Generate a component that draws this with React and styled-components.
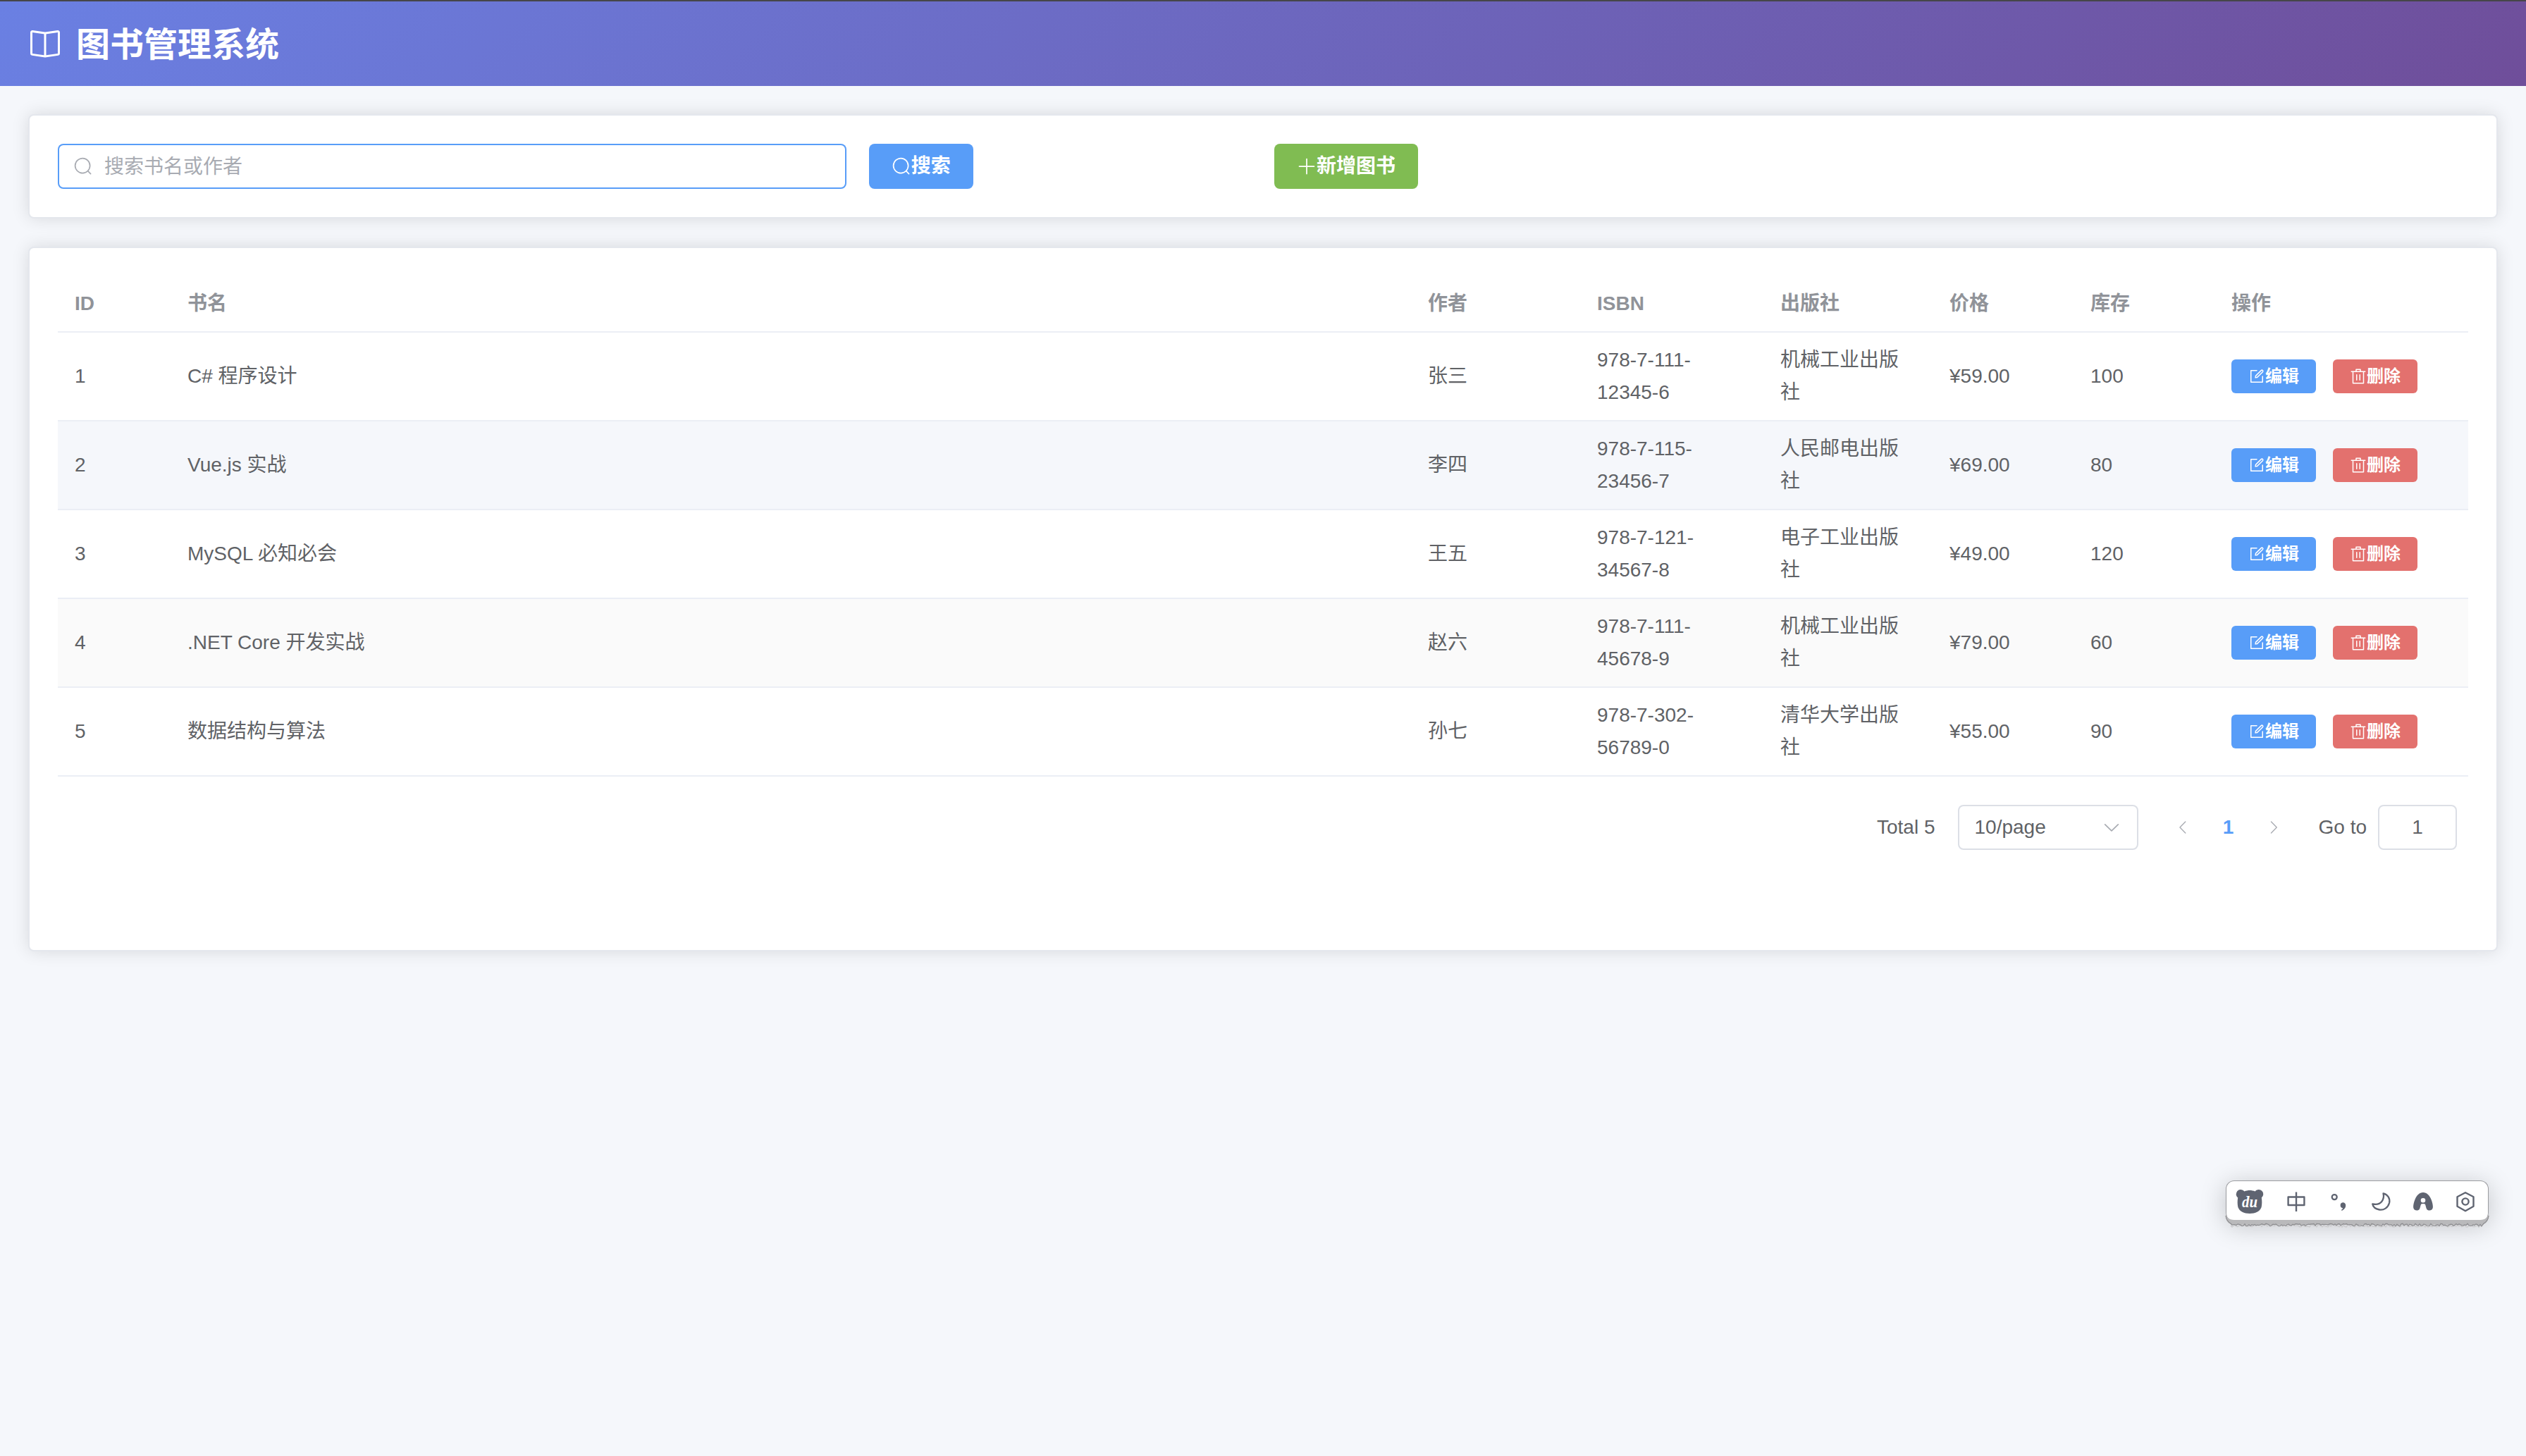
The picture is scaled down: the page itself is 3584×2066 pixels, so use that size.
import React from 'react';
import styled, { createGlobalStyle, css } from 'styled-components';

const c = {
  primary: '#589df8',
  success: '#80bc52',
  danger: '#e3716e',
  text: '#606266',
  muted: '#909399',
  placeholder: '#a8abb2',
  line: '#ebeef5',
  border: '#dcdfe6',
  page: '#f5f7fb',
};

const GlobalStyle = createGlobalStyle`
  * { box-sizing: border-box; }
  body {
    margin: 0;
    background: ${c.page};
    color: ${c.text};
    font-family: "Liberation Sans", Arial, "Noto Sans CJK SC", sans-serif;
    font-size: 28px;
  }
  input, button { font-family: inherit; }
`;

const Page = styled.div`
  position: relative;
  display: flex;
  flex-direction: column;
  min-height: 2066px;
  border-top: 2px solid #464649;
`;

const Header = styled.header`
  display: flex;
  align-items: center;
  gap: 20px;
  height: 120px;
  padding: 0 40px;
  color: #fff;
  background: linear-gradient(135deg, #6a80e3 0%, #6f4e9a 100%);
`;

const Title = styled.h1`
  margin: 0;
  padding-top: 4px;
  font-size: 48px;
  line-height: 72px;
  font-weight: 700;
`;

const Main = styled.main`
  display: flex;
  flex-direction: column;
  gap: 40px;
  padding: 40px;
`;

const Card = styled.section`
  min-height: ${(p) => p.$minHeight || 0}px;
  padding: 40px;
  background: #fff;
  border: 2px solid #e4e7ed;
  border-radius: 8px;
  box-shadow: 0 0 24px rgba(0, 0, 0, 0.12);
`;

const SearchGrid = styled.div`
  display: grid;
  grid-template-columns: repeat(24, 1fr);
  margin: 0 -16px;
`;

const Col = styled.div`
  grid-column: span ${(p) => p.$span};
  display: flex;
  min-width: 0;
  padding: 0 16px;
`;

const SearchBox = styled.label`
  display: flex;
  flex: 1;
  align-items: center;
  gap: 16px;
  height: 64px;
  padding: 0 22px;
  border-radius: 8px;
  box-shadow: inset 0 0 0 2px ${c.primary};
  color: ${c.placeholder};
`;

const SearchInput = styled.input`
  flex: 1;
  min-width: 0;
  height: 60px;
  padding: 1px 0 0;
  border: 0;
  outline: 0;
  background: transparent;
  color: ${c.text};
  font-size: 28px;
  &::placeholder { color: ${c.placeholder}; opacity: 1; }
`;

const tones = { primary: c.primary, success: c.success, danger: c.danger };

const Button = styled.button`
  display: inline-flex;
  align-items: center;
  justify-content: center;
  height: 64px;
  padding: 0 32px;
  border: 0;
  border-radius: 8px;
  background: ${(p) => tones[p.$tone]};
  color: #fff;
  font-size: 28px;
  font-weight: 700;
  line-height: 1;
  white-space: nowrap;
  ${(p) => p.$small && css`
    height: 48px;
    padding: 0 24px;
    border-radius: 6px;
    font-size: 24px;
  `}
`;

const Glyph = styled.svg`
  display: block;
  flex: none;
  width: ${(p) => p.$size}px;
  height: ${(p) => p.$size}px;
  fill: currentColor;
`;

const Table = styled.table`
  width: 100%;
  table-layout: fixed;
  border-collapse: separate;
  border-spacing: 0;
`;

const HeadCell = styled.th`
  height: 80px;
  padding: 16px 24px;
  border-bottom: 2px solid ${c.line};
  color: ${c.muted};
  font-weight: 700;
  line-height: 46px;
  text-align: left;
`;

const Row = styled.tr`
  background: ${(p) => p.$bg};
`;

const Cell = styled.td`
  height: 126px;
  padding: 16px 24px;
  border-bottom: 2px solid ${c.line};
  line-height: 46px;
  vertical-align: middle;
`;

const Actions = styled.div`
  display: flex;
  gap: 24px;
`;

const Pagination = styled.nav`
  display: flex;
  align-items: center;
  justify-content: flex-end;
  gap: 32px;
  margin-top: 40px;
  padding-right: 16px;
  height: 64px;
`;

const SizeSelect = styled.div`
  display: flex;
  align-items: center;
  justify-content: space-between;
  width: 256px;
  height: 64px;
  padding: 0 24px;
  border-radius: 8px;
  box-shadow: inset 0 0 0 2px ${c.border};
  svg { color: ${c.placeholder}; }
`;

const Pager = styled.div`
  display: flex;
`;

const PageItem = styled.span`
  display: flex;
  align-items: center;
  justify-content: center;
  width: 64px;
  height: 64px;
  color: ${(p) => (p.$active ? c.primary : c.placeholder)};
  font-weight: 700;
`;

const Jumper = styled.label`
  display: flex;
  align-items: center;
  gap: 16px;
`;

const JumpInput = styled.input`
  width: 112px;
  height: 64px;
  padding: 0 22px;
  border: 2px solid ${c.border};
  border-radius: 8px;
  outline: 0;
  background: #fff;
  color: ${c.text};
  font-size: 28px;
  text-align: center;
`;

const ImeBar = styled.aside`
  position: absolute;
  left: 3158px;
  top: 1673px;
  width: 373px;
  height: 58px;
  display: flex;
  align-items: center;
  gap: 20px;
  padding-left: 13px;
  border: 1px solid #9b9ca0;
  border-bottom: 0;
  border-radius: 12px;
  background: #fff;
  color: #5f6471;
  box-shadow: 0 6px 36px rgba(0, 0, 0, 0.22);
`;

const ImeEdge = styled.svg`
  position: absolute;
  left: 3157px;
  top: 1714px;
  width: 375px;
  height: 28px;
`;

const ImeSlot = styled.span`
  display: flex;
  justify-content: center;
  width: 40px;
  flex: none;
  &:first-child { margin-right: 6px; }
`;

const ImeIcon = styled.svg`
  display: block;
  width: ${(p) => p.$w || 32}px;
  height: ${(p) => p.$h || 32}px;
  overflow: visible;
`;

const paths = {
  reading: [
    'm512 863.36 384-54.848v-638.72L525.568 222.72a96 96 0 0 1-27.2 0L128 169.792v638.72zM137.024 106.432l370.432 52.928a32 32 0 0 0 9.088 0l370.432-52.928A64 64 0 0 1 960 169.792v638.72a64 64 0 0 1-54.976 63.36l-388.48 55.488a32 32 0 0 1-9.088 0l-388.48-55.488A64 64 0 0 1 64 808.512v-638.72a64 64 0 0 1 73.024-63.36z',
    'M480 192h64v704h-64z',
  ],
  search: ['m795.904 750.72 124.992 124.928a32 32 0 0 1-45.248 45.248L750.656 795.904a416 416 0 1 1 45.248-45.248zM480 832a352 352 0 1 0 0-704 352 352 0 0 0 0 704z'],
  plus: ['M480 480V128a32 32 0 0 1 64 0v352h352a32 32 0 1 1 0 64H544v352a32 32 0 1 1-64 0V544H128a32 32 0 0 1 0-64z'],
  edit: [
    'M832 512a32 32 0 1 1 64 0v352a32 32 0 0 1-32 32H160a32 32 0 0 1-32-32V160a32 32 0 0 1 32-32h352a32 32 0 0 1 0 64H192v640h640z',
    'm469.952 554.24 52.8-7.552L847.104 222.4a32 32 0 1 0-45.248-45.248L477.44 501.44l-7.552 52.8zm422.4-422.4a96 96 0 0 1 0 135.808l-331.84 331.84a32 32 0 0 1-18.112 9.088L436.8 623.68a32 32 0 0 1-36.224-36.224l15.104-105.6a32 32 0 0 1 9.024-18.112l331.904-331.84a96 96 0 0 1 135.744 0z',
  ],
  remove: ['M160 256H96a32 32 0 0 1 0-64h256V95.936a32 32 0 0 1 32-32h256a32 32 0 0 1 32 32V192h256a32 32 0 1 1 0 64h-64v672a32 32 0 0 1-32 32H192a32 32 0 0 1-32-32zm448-64v-64H416v64zM224 896h576V256H224zm192-128a32 32 0 0 1-32-32V416a32 32 0 0 1 64 0v320a32 32 0 0 1-32 32zm192 0a32 32 0 0 1-32-32V416a32 32 0 0 1 64 0v320a32 32 0 0 1-32 32z'],
  down: ['M831.872 340.864 512 652.672 192.128 340.864a30.592 30.592 0 0 0-42.752 0 29.12 29.12 0 0 0 0 41.6L489.664 714.24a32 32 0 0 0 44.672 0l340.288-331.712a29.12 29.12 0 0 0 0-41.728 30.592 30.592 0 0 0-42.752 0z'],
  left: ['M609.408 149.376 277.76 489.6a32 32 0 0 0 0 44.672l331.648 340.352a29.12 29.12 0 0 0 41.728 0 30.592 30.592 0 0 0 0-42.752L339.264 511.936l311.872-319.872a30.592 30.592 0 0 0 0-42.688 29.12 29.12 0 0 0-41.728 0z'],
  right: ['M340.864 149.312a30.592 30.592 0 0 0 0 42.752L652.736 512 340.864 831.872a30.592 30.592 0 0 0 0 42.752 29.12 29.12 0 0 0 41.728 0L714.24 534.336a32 32 0 0 0 0-44.672L382.592 149.376a29.12 29.12 0 0 0-41.728 0z'],
};

const Icon = ({ name, size = 28 }) => (
  <Glyph $size={size} viewBox="0 0 1024 1024" aria-hidden="true">
    {paths[name].map((d) => <path key={d} d={d} />)}
  </Glyph>
);

const columns = [
  ['ID', 160], ['书名', null], ['作者', 240], ['ISBN', 260],
  ['出版社', 240], ['价格', 200], ['库存', 200], ['操作', 360],
];

const books = [
  { id: 1, name: 'C# 程序设计', author: '张三', isbn: '978-7-111-12345-6', press: '机械工业出版社', price: '¥59.00', stock: 100 },
  { id: 2, name: 'Vue.js 实战', author: '李四', isbn: '978-7-115-23456-7', press: '人民邮电出版社', price: '¥69.00', stock: 80, bg: '#f5f7fb' },
  { id: 3, name: 'MySQL 必知必会', author: '王五', isbn: '978-7-121-34567-8', press: '电子工业出版社', price: '¥49.00', stock: 120 },
  { id: 4, name: '.NET Core 开发实战', author: '赵六', isbn: '978-7-111-45678-9', press: '机械工业出版社', price: '¥79.00', stock: 60, bg: '#fafafa' },
  { id: 5, name: '数据结构与算法', author: '孙七', isbn: '978-7-302-56789-0', press: '清华大学出版社', price: '¥55.00', stock: 90 },
];

// Uneven lower rim of the floating input bar.
const rim = (base, seed) => Array.from({ length: 178 }, (_, i) => {
  const noise = Math.sin((i + seed) * 12.9898) * 43758.5453;
  return `${10 + i * 2},${(base + (noise - Math.floor(noise)) * 3.6 - 1.8).toFixed(1)}`;
}).join(' L');

function InputMethodBar() {
  return (
    <>
      <ImeBar>
        <ImeSlot>
          <ImeIcon $w={40} $h={36} viewBox="0 0 40 36">
            <path fill="currentColor" d="M7 1a6.500 6.500 0 0 1 5.500 2.600C17 1.600 23 1.600 27.500 3.600A6.500 6.500 0 1 1 36.800 12.500C37.600 17 37.500 22 36.600 26C34.500 32 28 35 20 35S5.500 32 3.400 26C2.500 22 2.400 17 3.200 12.500A6.500 6.500 0 0 1 7 1Z" />
            <text x="9" y="26" textLength="22" lengthAdjust="spacingAndGlyphs" fill="#fff" fontSize="24" fontStyle="italic" fontWeight="700" fontFamily="Liberation Serif, serif">du</text>
          </ImeIcon>
        </ImeSlot>
        <ImeSlot>
          <ImeIcon viewBox="0 0 32 32" fill="none" stroke="currentColor" strokeWidth="2.400" strokeLinejoin="round">
            <path d="M4.600 9.500h22.800v11.500H4.600zM16 2.500v27.500" />
          </ImeIcon>
        </ImeSlot>
        <ImeSlot>
          <ImeIcon viewBox="0 0 32 32">
            <circle cx="10.200" cy="9.600" r="3.500" fill="none" stroke="currentColor" strokeWidth="2.300" />
            <path fill="currentColor" d="M22 17.300a4 4 0 0 1 4.200 4.500c0 3-2 5.500-5.500 7.200l-.8-1.200c1.400-.8 2-1.600 2.100-2.600a4 4 0 0 1 0-7.900Z" />
          </ImeIcon>
        </ImeSlot>
        <ImeSlot>
          <ImeIcon viewBox="0 0 32 32" fill="none" stroke="currentColor" strokeWidth="2.300" strokeLinejoin="round">
            <path d="M19.500 4.300C26 6 29.500 11.500 28 18C26.300 24.500 20.300 28.600 14 27.500C9 26.700 5 23.500 4.200 19.300C10 20.500 14.500 19.500 17.300 16C20 12.500 20.500 8.500 19.500 4.300Z" />
          </ImeIcon>
        </ImeSlot>
        <ImeSlot>
          <ImeIcon viewBox="0 0 32 32">
            <path fill="currentColor" fillRule="evenodd" d="M16 3C21 3 25 7 27.300 12.500C29 16.500 30 20.500 29.900 24C29.600 29.500 22.500 30 20.800 26C20.200 24.500 19.800 22 18.800 19.500Q16 18.300 13.200 19.500C12.200 22 11.800 24.500 11.200 26C9.500 30 2.400 29.500 2.100 24C2 20.500 3 16.500 4.700 12.500C7 7 11 3 16 3ZM16 11a3.300 3.300 0 1 0 0 6.600a3.300 3.300 0 1 0 0-6.600Z" />
          </ImeIcon>
        </ImeSlot>
        <ImeSlot>
          <ImeIcon viewBox="0 0 32 32" fill="none" stroke="currentColor" strokeWidth="2.400" strokeLinejoin="round">
            <path d="M16 3.200 27.500 9.200V22.800L16 29.200 4.500 22.800V9.200Z" />
            <circle cx="16" cy="16" r="4.600" />
          </ImeIcon>
        </ImeSlot>
      </ImeBar>
      <ImeEdge viewBox="0 0 375 28" fill="none" aria-hidden="true">
        <path fill="#b9b9bb" d="M1 4Q2 15 13 15H362Q373 15 374 4V12Q372 20 364 22H11Q3 20 1 12Z" />
        <path stroke="#c9c9cb" strokeWidth="1.200" d={`M8 23 L${rim(23.5, 41)}`} />
        <path stroke="#8d8d90" strokeWidth="1.200" d={`M1 9 Q2 17 8 20 L${rim(22, 3)} L367 20 Q373 17 374 9`} />
      </ImeEdge>
    </>
  );
}

export default function App() {
  return (
    <Page>
      <GlobalStyle />
      <Header>
        <Icon name="reading" size={48} />
        <Title>图书管理系统</Title>
      </Header>
      <Main>
        <Card>
          <SearchGrid>
            <Col $span={8}>
              <SearchBox>
                <Icon name="search" />
                <SearchInput placeholder="搜索书名或作者" />
              </SearchBox>
            </Col>
            <Col $span={4}>
              <Button $tone="primary"><Icon name="search" />搜索</Button>
            </Col>
            <Col $span={4}>
              <Button $tone="success"><Icon name="plus" />新增图书</Button>
            </Col>
          </SearchGrid>
        </Card>
        <Card $minHeight={1000}>
          <Table>
            <colgroup>
              {columns.map(([label, width]) => <col key={label} width={width || undefined} />)}
            </colgroup>
            <thead>
              <tr>{columns.map(([label]) => <HeadCell key={label}>{label}</HeadCell>)}</tr>
            </thead>
            <tbody>
              {books.map((b) => (
                <Row key={b.id} $bg={b.bg || '#fff'}>
                  <Cell>{b.id}</Cell>
                  <Cell>{b.name}</Cell>
                  <Cell>{b.author}</Cell>
                  <Cell>{b.isbn}</Cell>
                  <Cell>{b.press}</Cell>
                  <Cell>{b.price}</Cell>
                  <Cell>{b.stock}</Cell>
                  <Cell>
                    <Actions>
                      <Button $small $tone="primary"><Icon name="edit" size={24} />编辑</Button>
                      <Button $small $tone="danger"><Icon name="remove" size={24} />删除</Button>
                    </Actions>
                  </Cell>
                </Row>
              ))}
            </tbody>
          </Table>
          <Pagination>
            <span>Total 5</span>
            <SizeSelect><span>10/page</span><Icon name="down" /></SizeSelect>
            <Pager>
              <PageItem><Icon name="left" size={24} /></PageItem>
              <PageItem $active>1</PageItem>
              <PageItem><Icon name="right" size={24} /></PageItem>
            </Pager>
            <Jumper>Go to<JumpInput defaultValue="1" /></Jumper>
          </Pagination>
        </Card>
      </Main>
      <InputMethodBar />
    </Page>
  );
}
